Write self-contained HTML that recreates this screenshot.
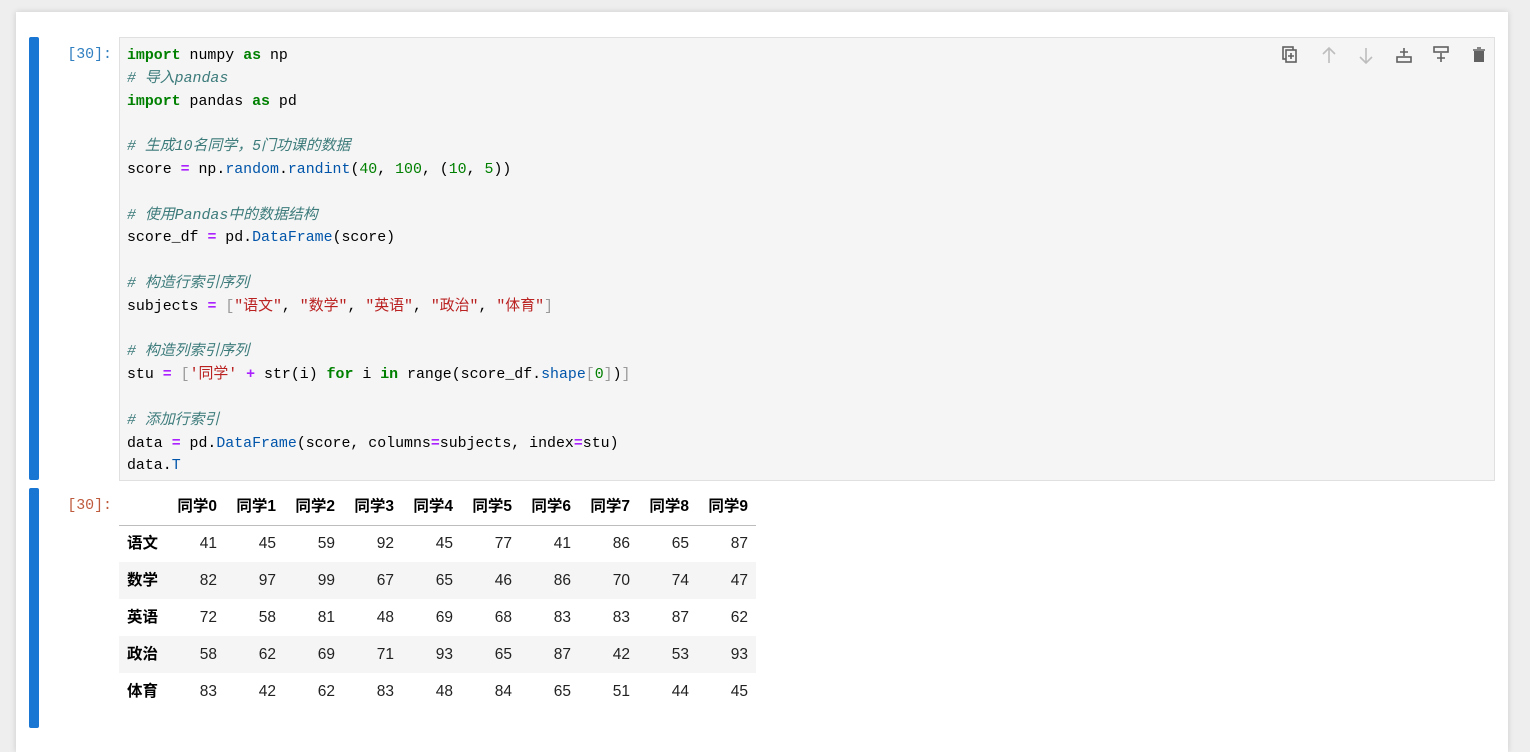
<!DOCTYPE html>
<html><head><meta charset="utf-8"><style>
body{margin:0;background:#eeeeee;width:1530px;height:740px;overflow:hidden;font-family:"Liberation Sans","Noto Sans CJK SC",sans-serif}
.panel{position:absolute;left:16px;top:12px;width:1492px;height:740px;background:#fff;box-shadow:0 0 6px rgba(0,0,0,.15)}
.bar{position:absolute;left:29px;width:10px;background:#1976d2;border-radius:2px}
.prompt{position:absolute;left:40px;width:72px;text-align:right;font-family:"Liberation Mono","Noto Sans CJK SC",monospace;font-size:14.9px}
.code{position:absolute;left:119px;top:37px;width:1374px;height:442px;background:#f5f5f5;border:1px solid #e0e0e0}
pre{margin:0;position:absolute;left:7px;top:7px;font-family:"Liberation Mono","Noto Sans CJK SC",monospace;font-size:14.9px;line-height:22.8px;color:#000}
.k{color:#008000;font-weight:bold}.c{color:#3d7b7b;font-style:italic}.o{color:#aa22ff;font-weight:bold}.n{color:#008000}.a{color:#0055aa}.s{color:#ba2121}.p{color:#999}
table{position:absolute;left:119px;top:489px;border-collapse:collapse;font-size:15.5px;color:#222;line-height:18px}
th,td{height:37px;padding:0 8px;text-align:right;box-sizing:border-box}
thead th{border-bottom:1px solid #bdbdbd;height:36px;color:#000}
tbody th{text-align:left;color:#000}
tbody tr:nth-child(even){background:#f5f5f5}
td{width:59px}
</style></head><body>
<div class="panel"></div>
<div class="bar" style="top:37px;height:443px"></div>
<div class="bar" style="top:488px;height:240px"></div>
<div class="prompt" style="top:47px;color:#307fc1">[30]:</div>
<div class="prompt" style="top:498px;color:#bf5b3d">[30]:</div>
<div class="code"><pre><span class="k">import</span> numpy <span class="k">as</span> np
<span class="c"># 导入pandas</span>
<span class="k">import</span> pandas <span class="k">as</span> pd

<span class="c"># 生成10名同学，5门功课的数据</span>
score <span class="o">=</span> np.<span class="a">random</span>.<span class="a">randint</span>(<span class="n">40</span>, <span class="n">100</span>, (<span class="n">10</span>, <span class="n">5</span>))

<span class="c"># 使用Pandas中的数据结构</span>
score_df <span class="o">=</span> pd.<span class="a">DataFrame</span>(score)

<span class="c"># 构造行索引序列</span>
subjects <span class="o">=</span> <span class="p">[</span><span class="s">"语文"</span>, <span class="s">"数学"</span>, <span class="s">"英语"</span>, <span class="s">"政治"</span>, <span class="s">"体育"</span><span class="p">]</span>

<span class="c"># 构造列索引序列</span>
stu <span class="o">=</span> <span class="p">[</span><span class="s">'同学'</span> <span class="o">+</span> str(i) <span class="k">for</span> i <span class="k">in</span> range(score_df.<span class="a">shape</span><span class="p">[</span><span class="n">0</span><span class="p">]</span>)<span class="p">]</span>

<span class="c"># 添加行索引</span>
data <span class="o">=</span> pd.<span class="a">DataFrame</span>(score, columns<span class="o">=</span>subjects, index<span class="o">=</span>stu)
data.<span class="a">T</span></pre>
<svg style="position:absolute;left:1160px;top:6px" width="210" height="22" viewBox="0 0 210 22" fill="none" stroke="#616161" stroke-width="1.6">
<rect x="3" y="3" width="10" height="12"/><rect x="6" y="6" width="10" height="12" fill="#f5f5f5"/><path d="M11 9v6M8 12h6"/>
<path d="M49 4v15M43 10l6-6 6 6" stroke="#bdbdbd"/>
<path d="M86 4v15M80 13l6 6 6-6" stroke="#bdbdbd"/>
<path d="M124 4v8M120 8h8"/><rect x="117" y="13" width="14" height="5"/>
<rect x="154" y="3" width="14" height="5"/><path d="M161 9v9M157 14h8"/>
<path d="M193 6h12M197 4h4" /><rect x="194" y="7" width="10" height="11" fill="#616161" stroke="none"/>
</svg>
</div>
<table>
<thead><tr><th></th><th>同学0</th><th>同学1</th><th>同学2</th><th>同学3</th><th>同学4</th><th>同学5</th><th>同学6</th><th>同学7</th><th>同学8</th><th>同学9</th></tr></thead>
<tbody>
<tr><th>语文</th><td>41</td><td>45</td><td>59</td><td>92</td><td>45</td><td>77</td><td>41</td><td>86</td><td>65</td><td>87</td></tr>
<tr><th>数学</th><td>82</td><td>97</td><td>99</td><td>67</td><td>65</td><td>46</td><td>86</td><td>70</td><td>74</td><td>47</td></tr>
<tr><th>英语</th><td>72</td><td>58</td><td>81</td><td>48</td><td>69</td><td>68</td><td>83</td><td>83</td><td>87</td><td>62</td></tr>
<tr><th>政治</th><td>58</td><td>62</td><td>69</td><td>71</td><td>93</td><td>65</td><td>87</td><td>42</td><td>53</td><td>93</td></tr>
<tr><th>体育</th><td>83</td><td>42</td><td>62</td><td>83</td><td>48</td><td>84</td><td>65</td><td>51</td><td>44</td><td>45</td></tr>
</tbody></table>
</body></html>
